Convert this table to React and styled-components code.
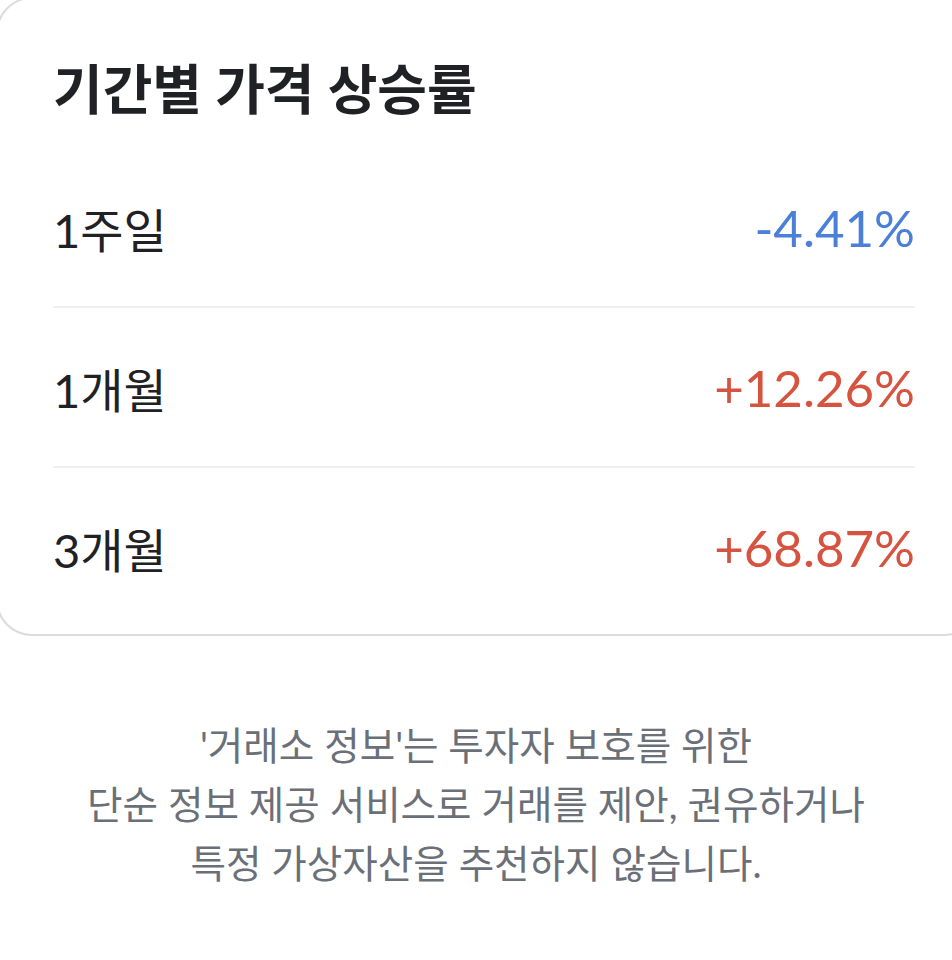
import styled, { createGlobalStyle } from "styled-components";

const GlobalStyle = createGlobalStyle`
  html, body {
    margin: 0;
    padding: 0;
    background: #ffffff;
    overflow-x: hidden;
  }
  body {
    font-family: Lato, "Noto Sans CJK KR", sans-serif;
  }
`;

const COLORS = {
  text: "#1f2125",
  up: "#d5533f",
  down: "#4b7fd8",
  gray: "#6b7078",
  line: "#efefef",
  border: "#dcdcdc",
};

const rates = [
  { label: "1주일", value: "-4.41%", dir: "down" },
  { label: "1개월", value: "+12.26%", dir: "up" },
  { label: "3개월", value: "+68.87%", dir: "up" },
];

const Page = styled.div`
  width: 100%;
  padding-bottom: 60px;
`;

const Card = styled.section`
  margin: -3px -28px 0 -4px;
  padding: 63px 63px 8px 55px;
  border: 2px solid ${COLORS.border};
  border-radius: 36px;
  background: #ffffff;
`;

const Title = styled.h2`
  margin: 0 0 30px;
  font-family: Lato, "Noto Sans CJK KR", sans-serif;
  font-size: 54px;
  font-weight: 700;
  line-height: 56px;
  color: ${COLORS.text};
`;

const Row = styled.div`
  display: flex;
  justify-content: space-between;
  align-items: center;
  height: 158px;
  border-top: ${(props) => (props.first ? "none" : `2px solid ${COLORS.line}`)};
`;

const Label = styled.span`
  font-size: 47px;
  color: ${COLORS.text};
`;

const Value = styled.span`
  font-family: Lato, sans-serif;
  font-size: 51px;
  color: ${(props) => (props.dir === "up" ? COLORS.up : COLORS.down)};
`;

const Notice = styled.p`
  margin: 80px 0 0;
  text-align: center;
  font-family: Lato, "Noto Sans CJK KR", sans-serif;
  font-size: 38.6px;
  line-height: 59px;
  color: ${COLORS.gray};
`;

const App = () => {
  return (
    <Page>
      <GlobalStyle />
      <Card>
        <Title>기간별 가격 상승률</Title>
        {rates.map((r, i) => (
          <Row key={r.label} first={i === 0}>
            <Label>{r.label}</Label>
            <Value dir={r.dir}>{r.value}</Value>
          </Row>
        ))}
      </Card>
      <Notice>
        '거래소 정보'는 투자자 보호를 위한
        <br />
        단순 정보 제공 서비스로 거래를 제안, 권유하거나
        <br />
        특정 가상자산을 추천하지 않습니다.
      </Notice>
    </Page>
  );
};

export default App;
